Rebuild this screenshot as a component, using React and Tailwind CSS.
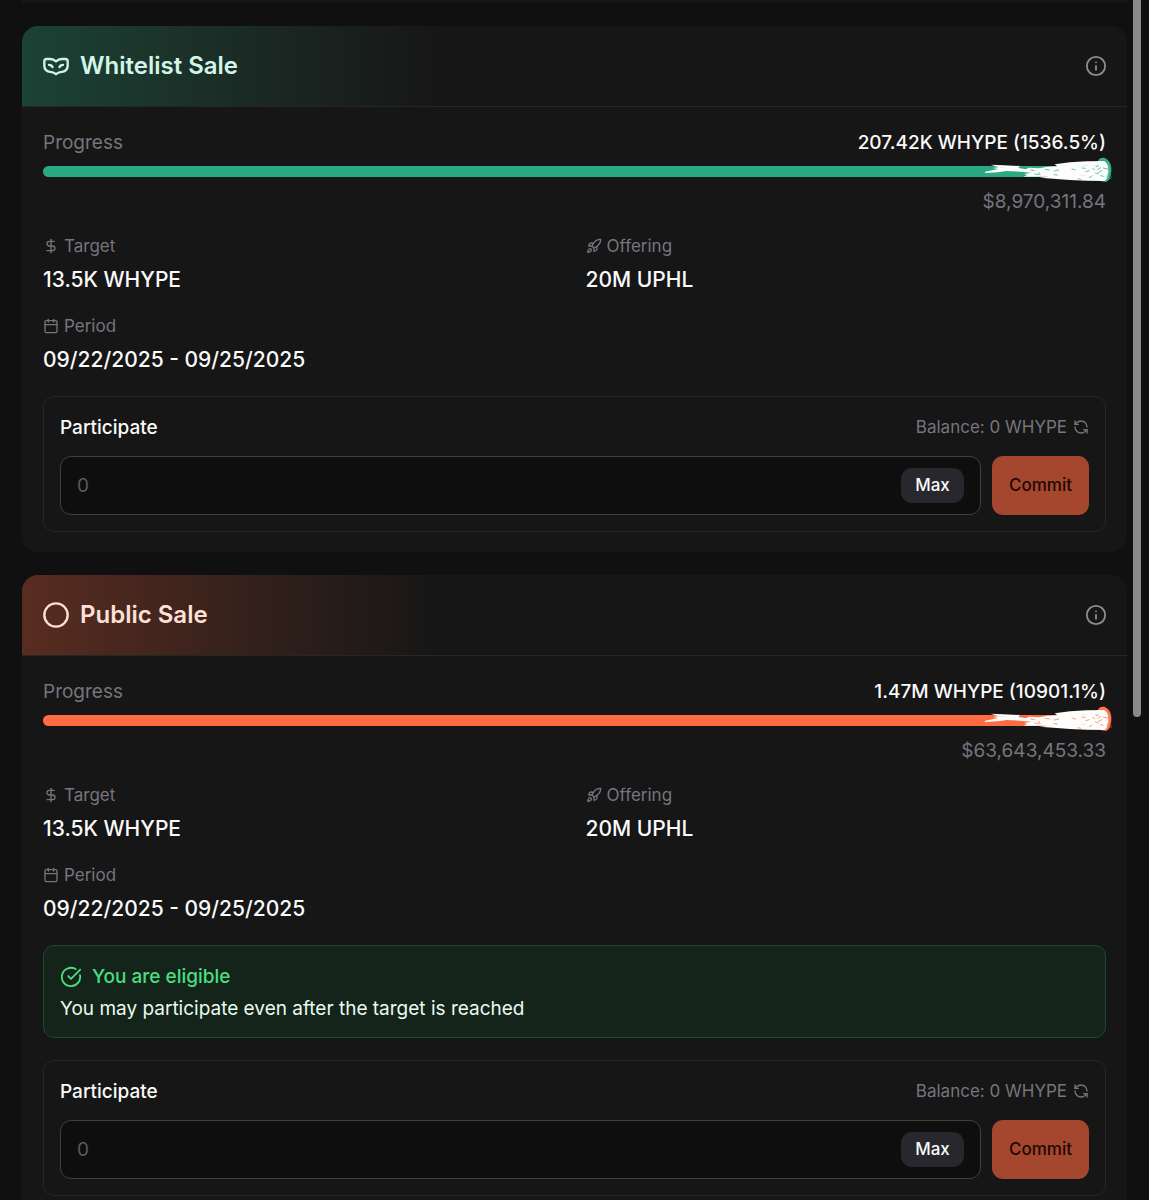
import React, { useId } from "react";
import {
  Calendar,
  Circle,
  CircleCheckBig,
  DollarSign,
  Info,
  RefreshCcw,
  Rocket,
  VenetianMask,
} from "lucide-react";

function Flame({ className, color }) {
  return (
    <svg className={className} viewBox="42 21 384 78" fill="none" aria-hidden="true">
      <path
        d="M384 32C388 22 404 20 411 28C422 36 425 50 424 63C423 79 419 91 409 96L394 94Z"
        fill={color}
      />
      <path
        d="M62 44L100 46L150 48L145 54L168 58L176 53L208 55L232 50L262 49L254 43L300 37L350 34L402 33C412 37 415 48 415 62C415 78 411 90 403 93L350 92L300 90L250 86L208 83L236 80L160 80L172 75L162 72L184 68L150 65L110 63L84 67L44 69L46 65L84 57L68 54L86 52Z"
        fill="#fdfdfb"
      />
      <path
        d="M389 29C394 25 403 25 407 30M411 34C419 42 420 54 418 64C417 76 414 84 409 90"
        stroke="#fff"
        strokeWidth="1"
        opacity=".6"
      />
      <path
        d="M182 60l10 2m14 5l4 7m-16-2l12 2m20-16l12 2m16 3l12-3m-14 14l10 1m44-18l10 3m20-6l10 1m2 10l10-3m10-7l6 4m10 9l12-6m-18-12l8-2m-2 10l8-5m-16 16l8 3m16-18l6 2m-40 22l-8 5m34-6l8 2m6-24l8 3m-2 24c-2-8 4-14 9-12m-5 16c5 2 8-2 10-6m-102 6l8 2"
        stroke={color}
        strokeWidth="2"
        strokeLinecap="round"
      />
      <path
        d="M92 52l16 2m80 5l16 2m40 2l22-3m70-12l18-3m-26 30l20 2m24-30l14-1"
        stroke="#9ca3af"
        strokeWidth="1"
        opacity=".6"
      />
    </svg>
  );
}

function Stat({ icon: Icon, label, value }) {
  return (
    <div>
      <dt className="flex items-center gap-[5px] text-[17px] leading-6 text-[#75757d]">
        <Icon size={16} strokeWidth={2} aria-hidden="true" />
        {label}
      </dt>
      <dd className="mt-[6px] text-[21px] leading-8 font-medium text-[#fafafa]">{value}</dd>
    </div>
  );
}

function Participate() {
  const id = useId();
  return (
    <form
      className="rounded-[11px] border border-[#262626] p-4"
      onSubmit={(event) => event.preventDefault()}
    >
      <div className="flex items-start justify-between">
        <label htmlFor={id} className="text-[19px] leading-[30px] font-medium text-[#fafafa]">
          Participate
        </label>
        <div className="flex items-center gap-[6px] text-[17px] leading-7 text-[#75757d]">
          Balance: 0 WHYPE
          <button type="button" aria-label="Refresh balance">
            <RefreshCcw size={16} strokeWidth={2} />
          </button>
        </div>
      </div>
      <div className="mt-[13px] flex gap-[11px]">
        <div className="flex h-[59px] min-w-0 flex-1 items-center rounded-[11px] border border-[#404040] bg-[#0e0e0e] px-4">
          <input
            id={id}
            type="text"
            inputMode="decimal"
            placeholder="0"
            className="min-w-0 flex-1 bg-transparent pt-[2px] text-[19px] text-[#fafafa] outline-none placeholder:text-[#5a5a5a]"
          />
          <button
            type="button"
            className="h-[35px] w-[63px] rounded-[11px] bg-[#27272d] text-[17px] font-medium text-[#fafafa]"
          >
            Max
          </button>
        </div>
        <button
          type="submit"
          className="w-[97px] rounded-[11px] bg-[#a5472e] text-[17px] font-medium text-[#1d0904]"
        >
          Commit
        </button>
      </div>
    </form>
  );
}

function SaleCard({ icon: Icon, title, headerClass, titleClass, barClass, color, raised, usd, children }) {
  return (
    <section className="rounded-2xl bg-[#161616]">
      <header
        className={`flex h-[81px] items-center justify-between rounded-t-2xl border-b border-[#262626] px-5 ${headerClass}`}
      >
        <div className={`flex items-center gap-[10px] ${titleClass}`}>
          <Icon size={28} strokeWidth={2} aria-hidden="true" />
          <h2 className="text-[24px] leading-8 font-semibold">{title}</h2>
        </div>
        <button type="button" aria-label={`About ${title}`} className="text-[#8b8b93]">
          <Info size={22} strokeWidth={2} />
        </button>
      </header>
      <div className="px-[21px] pt-[22px] pb-5">
        <div className="flex items-center justify-between text-[19px] leading-7">
          <span className="text-[#75757d]">Progress</span>
          <span className="font-medium text-[#fafafa]">{raised}</span>
        </div>
        <div className={`relative mt-[9px] h-[11px] rounded-full ${barClass}`}>
          <Flame className="absolute -top-[9px] -right-[6px] h-[26px] w-32" color={color} />
        </div>
        <p className="mt-[11px] text-right text-[19px] leading-7 text-[#75757d]">{usd}</p>
        <dl className="mt-[18px] mb-5 grid grid-cols-2 gap-x-[22px] gap-y-[18px]">
          <Stat icon={DollarSign} label="Target" value="13.5K WHYPE" />
          <Stat icon={Rocket} label="Offering" value="20M UPHL" />
          <Stat icon={Calendar} label="Period" value="09/22/2025 - 09/25/2025" />
        </dl>
        {children}
        <Participate />
      </div>
    </section>
  );
}

export default function App() {
  return (
    <div className="flex h-screen overflow-hidden bg-[#101010] font-['Inter',sans-serif]">
      <main className="flex min-w-0 flex-1 flex-col gap-[23px] pl-[22px]">
        <div className="h-[3px] shrink-0 bg-[#161616]" />
        <SaleCard
          icon={VenetianMask}
          title="Whitelist Sale"
          headerClass="bg-linear-to-r from-[#1b4335] to-[#161616] to-38%"
          titleClass="text-[#d3f5e8]"
          barClass="bg-[#2aaa82]"
          color="#2aaa82"
          raised="207.42K WHYPE (1536.5%)"
          usd="$8,970,311.84"
        />
        <SaleCard
          icon={Circle}
          title="Public Sale"
          headerClass="bg-linear-to-r from-[#592c20] to-[#161616] to-38%"
          titleClass="text-[#ffe0d6]"
          barClass="bg-[#ff6b43]"
          color="#ff6b43"
          raised="1.47M WHYPE (10901.1%)"
          usd="$63,643,453.33"
        >
          <div className="mb-[22px] rounded-[11px] border border-[#1c4a2c] bg-[#14241a] px-4 pt-[15px] pb-[13px]">
            <p className="flex items-center gap-[10px] text-[19px] leading-8 font-medium text-[#4ade80]">
              <CircleCheckBig size={22} strokeWidth={2} aria-hidden="true" />
              You are eligible
            </p>
            <p className="text-[19px] leading-[31px] text-[#e8fbef]">
              You may participate even after the target is reached
            </p>
          </div>
        </SaleCard>
      </main>
      <div className="flex w-[22px] shrink-0 pl-[6px]" aria-hidden="true">
        <div className="h-[717px] w-2 rounded-b-full bg-[#8a8a8a]" />
      </div>
    </div>
  );
}
